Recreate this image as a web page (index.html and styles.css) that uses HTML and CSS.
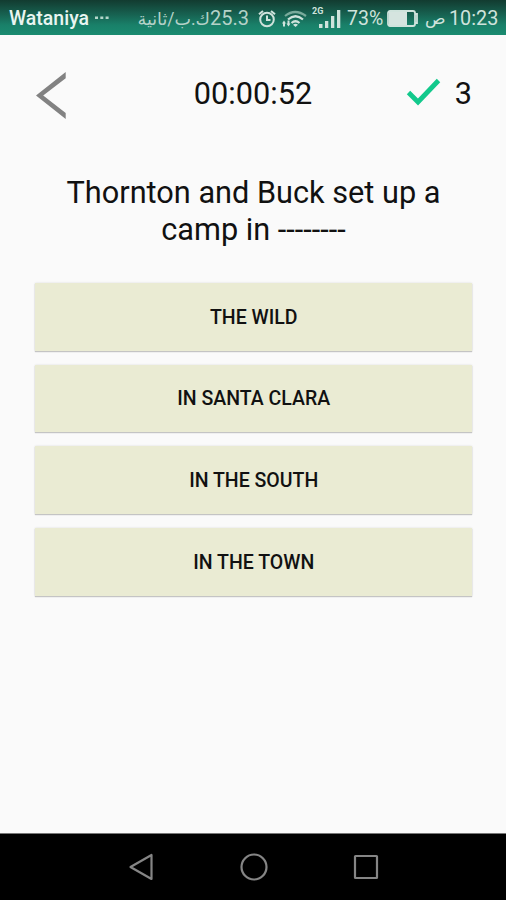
FILE: index.html
```html
<!DOCTYPE html>
<html lang="en">
<head>
<meta charset="utf-8">
<title>Quiz</title>
<link rel="stylesheet" href="styles.css">
</head>
<body>
<div class="screen">
  <header class="status">
    <span class="carrier">Wataniya</span>
    <svg class="dots" width="14" height="4" viewBox="0 0 14 4"><path d="M0 .5h3v2.500H0zM5.300 .5h3v2.500h-3zM10.600 .5h3v2.500h-3z" fill="#b5d5ca"/></svg>
    <span class="speed" dir="rtl"><span class="rate">25.3</span>ك.ب/ثانية</span>
    <svg class="alarm" width="18" height="20" viewBox="0 0 18 20" fill="none" stroke="#cfe3dc" stroke-width="2"><circle cx="9" cy="10.500" r="6.800"/><path d="M9 6.500V11h3.500M1 5.300l4-3.400M17 5.300l-4-3.400"/></svg>
    <svg class="wifi" width="25" height="20" viewBox="0 0 25 20" fill="none" stroke="#cfe3dc" stroke-width="2.200"><path d="M3 7Q13 -1 24 7" stroke="#79aa9b"/><path d="M6 10.500q7.500-6.500 15 0M9.500 14q4-3.500 8 0"/><path d="M11 15.700q2.500-2 5 0L13.500 18z" fill="#cfe3dc" stroke="none"/><path d="M0 14.500l2-3 2 3H3v3H1v-3zM4.500 14.500h1v-3h2v3h1l-2 3z" fill="#cfe3dc" stroke="none"/></svg>
    <div class="signal">
      <span class="network">2G</span>
      <svg width="22" height="18" viewBox="0 0 22 18" fill="#cfe3dc"><path d="M0 14h3.500v4H0zM6 11h3.300v7H6zM12 6h3.300v12H12zM18 0h3.300v18H18z"/></svg>
    </div>
    <span class="percent">73%</span>
    <svg class="battery" width="32" height="17" viewBox="0 0 32 17"><rect x="1" y="1" width="27" height="15" rx="2" fill="none" stroke="#cfe3dc" stroke-width="1.800"/><path d="M2 2h18v13H2z" fill="#d5e4df"/><path d="M28 4h2v9h-2" fill="none" stroke="#cfe3dc" stroke-width="1.800"/></svg>
    <span class="meridiem">ص</span>
    <span class="clock">10:23</span>
  </header>
  <main class="quiz">
    <div class="toolbar">
      <svg class="back" width="32" height="48" viewBox="0 0 32 48"><path d="M29.700 0v6.200L7.200 23.500 29.700 41v6L0 23.500z" fill="#828282"/></svg>
      <span class="timer">00:00:52</span>
      <div class="score">
        <svg width="36" height="30" viewBox="0 0 36 30"><path d="M2.500 15.500L12 25 32.500 3.500" fill="none" stroke="#12c98c" stroke-width="4.800"/></svg>
        <span>3</span>
      </div>
    </div>
    <h1 class="question">Thornton and Buck set up a<br>camp in --------</h1>
    <div class="answers">
      <button class="answer">THE WILD</button>
      <button class="answer">IN SANTA CLARA</button>
      <button class="answer">IN THE SOUTH</button>
      <button class="answer">IN THE TOWN</button>
    </div>
  </main>
  <nav class="navbar">
    <svg width="28" height="28" viewBox="0 0 28 28"><path d="M3.500 14L24.500 2v24z"/></svg>
    <svg width="28" height="28" viewBox="0 0 28 28"><circle cx="14" cy="14" r="12.500"/></svg>
    <svg width="28" height="28" viewBox="0 0 28 28"><rect x="3" y="3" width="22" height="22" rx=".5"/></svg>
  </nav>
</div>
</body>
</html>
```
FILE: styles.css
```css
* { box-sizing: border-box; }
body { margin: 0; font-family: Roboto, "DejaVu Sans", sans-serif; background: #fafafa; }
svg { display: block; flex: none; }
.screen { width: 506px; height: 900px; display: flex; flex-direction: column; overflow: hidden; }
.status {
  height: 35px; flex: none; display: flex; align-items: center;
  padding: 2px 0 0 9px; white-space: nowrap; color: #cfe3dc;
  font-size: 19px; line-height: 33px;
  background: linear-gradient(#123b30 0, #14483b 5px, #176352 15px, #198069 25px, #1a8b70 35px);
}
.status > * { flex: none; }
.carrier { width: 80px; font-size: 19.5px; font-weight: 500; color: #e9f5f1; }
.dots { margin: 0 0 2px 6px; }
.speed { width: 110px; margin-left: 30px; font-size: 17.5px; color: #b4d2c8; }
.rate { font-size: 20px; }
.alarm { margin-left: 9px; }
.wifi { margin-left: 6px; }
.signal { width: 34px; height: 24px; margin-left: 5px; position: relative; display: flex; align-items: flex-end; padding: 0 0 3px 7px; }
.network { position: absolute; left: 0; top: -1px; font-size: 9px; line-height: 10px; font-weight: 700; }
.percent { width: 39px; margin-left: 1px; font-size: 19.5px; }
.battery { margin-left: 1px; }
.meridiem { width: 19px; margin-left: 6px; font-size: 17px; }
.clock { margin-left: 5px; font-size: 19.8px; }
.quiz { flex: 1; padding: 37px 34px 0; color: #111; }
.toolbar { display: grid; grid-template-columns: 1fr auto 1fr; height: 48px; }
.back { margin-left: 2px; }
.timer { font-size: 30.7px; line-height: 43px; }
.score { display: flex; justify-content: flex-end; gap: 13px; font-size: 30.7px; line-height: 43px; }
.score svg { margin-top: 5px; }
.question { margin: 54px 0 0; padding-left: 1px; text-align: center; font-weight: 400; font-size: 30.7px; line-height: 37px; }
.answers { margin-top: 35px; display: grid; gap: 14.2px; }
.answer {
  height: 67.5px; margin: 0 0 0 .5px; padding: 1px 0 0 1px; border: 0;
  background: #eaebd3; color: #111; font: 500 19.5px Roboto, sans-serif;
  box-shadow: 0 1px 1px #c4c4c4, 0 0 2px #ddd;
}
.navbar { height: 67px; flex: none; background: #000; border-top: 1px solid #777; display: flex; justify-content: center; gap: 84.500px; padding: 19px 0 0 1px; }
.navbar svg { fill: none; stroke: #858585; stroke-width: 2.2; stroke-linejoin: round; }
```
